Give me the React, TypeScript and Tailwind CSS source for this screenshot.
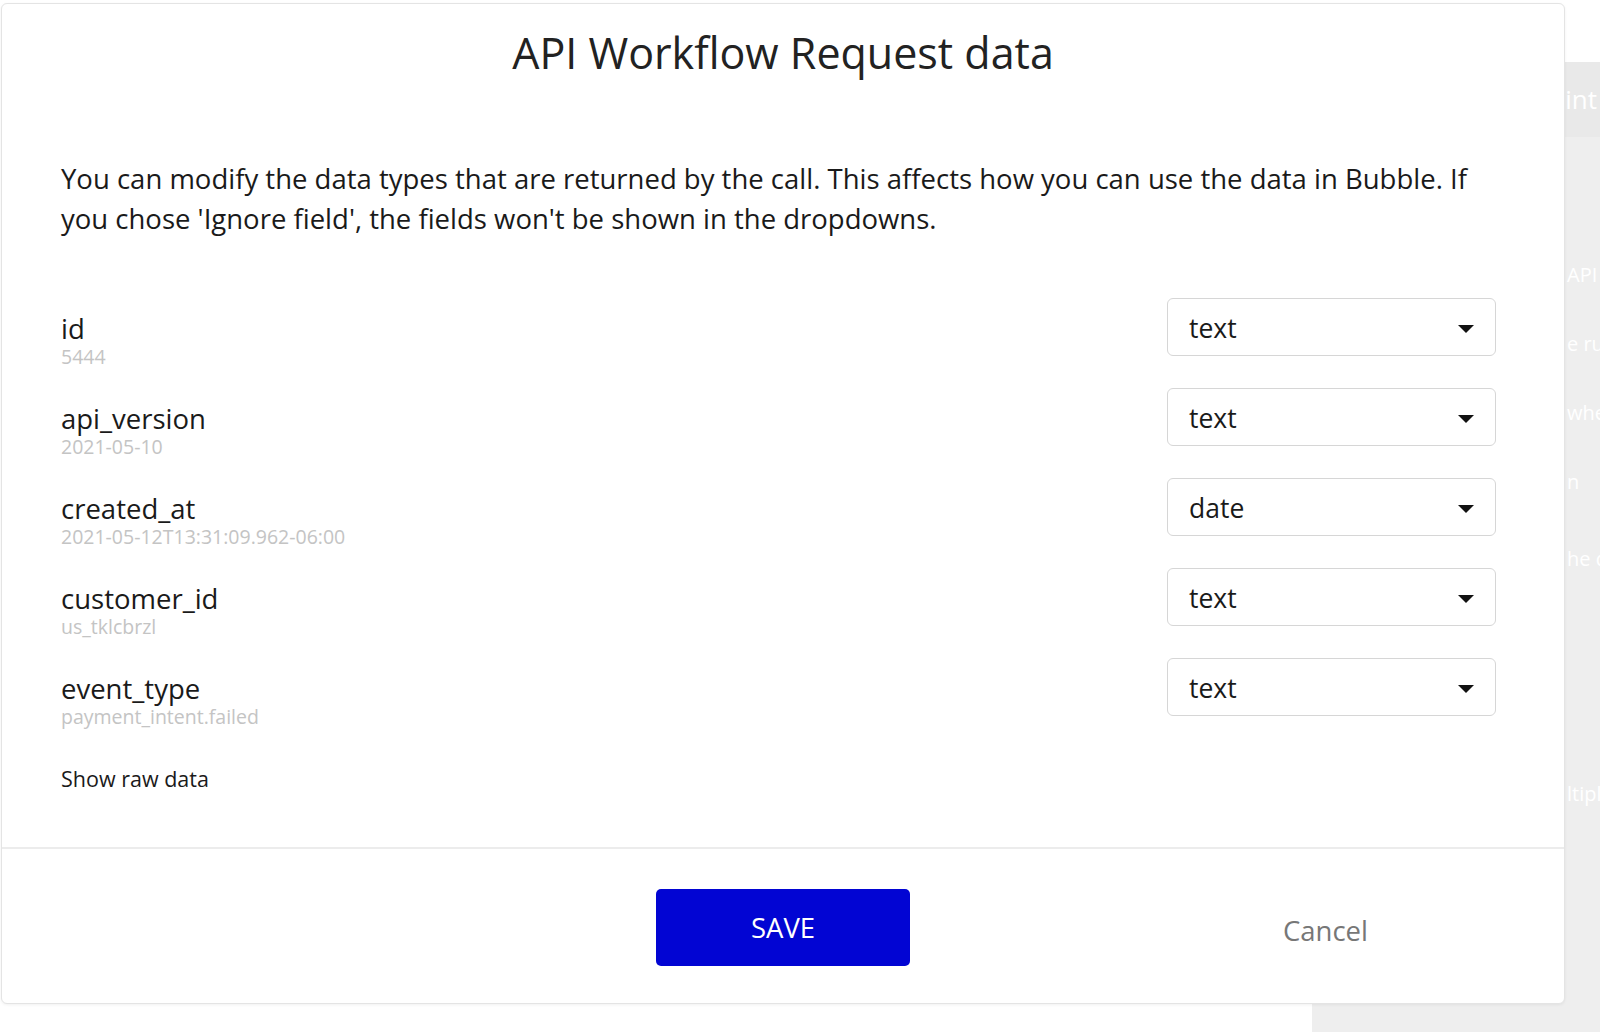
import React from 'react';

const fields = [
  { name: 'id', sample: '5444', type: 'text' },
  { name: 'api_version', sample: '2021-05-10', type: 'text' },
  { name: 'created_at', sample: '2021-05-12T13:31:09.962-06:00', type: 'date' },
  { name: 'customer_id', sample: 'us_tklcbrzl', type: 'text' },
  { name: 'event_type', sample: 'payment_intent.failed', type: 'text' },
];

function Caret() {
  return (
    <svg width="18" height="10" viewBox="0 0 18 10" className="shrink-0">
      <path d="M1 1 L17 1 L9 9 Z" fill="#111" />
    </svg>
  );
}

function TypeSelect({ value }: { value: string }) {
  return (
    <div className="w-[329px] h-[58px] shrink-0 flex items-center justify-between pt-[3px] pl-[21px] pr-[20px] border border-[#d6d6d6] rounded-[6px] bg-white">
      <span className="text-[26.5px] text-[#1a1a1a]">{value}</span>
      <Caret />
    </div>
  );
}

export default function App() {
  return (
    <div className="relative w-[1600px] h-[1032px] overflow-hidden bg-white font-['Open_Sans',sans-serif]">
      {/* page behind the popup */}
      <div className="flex h-full">
        <div className="flex-1" />
        <div className="w-[288px] mt-[62px] flex flex-col">
          <div className="h-[75px] bg-[#e9e9e9] flex items-center justify-end pr-[3px] text-[26px] text-white whitespace-nowrap">
            Endpoint
          </div>
          <div className="flex-1 bg-[#eeeeee] text-[20px] text-white whitespace-nowrap pl-[255px] pt-[123px] flex flex-col">
            <div className="h-[69px]">API calls</div>
            <div className="h-[69px]">e run</div>
            <div className="h-[69px]">when</div>
            <div className="h-[77px]">n</div>
            <div className="h-[235px]">he data</div>
            <div>ltiple</div>
          </div>
        </div>
      </div>

      {/* popup */}
      <div className="absolute left-[1px] top-[3px] w-[1564px] h-[1001px] bg-white border border-[#e4e4e4] rounded-[6px] shadow-[0_1px_3px_rgba(0,0,0,0.06)] flex flex-col">
        <div className="flex-1 px-[59px]">
          <h1 className="pt-[21px] text-center text-[43px] leading-[56px] text-[#222]">API Workflow Request data</h1>
          <p className="mt-[78px] pr-[9px] text-[27.5px] leading-[40px] text-[#1a1a1a]">
            You can modify the data types that are returned by the call. This affects how you can use the data in Bubble. If you chose 'Ignore field', the fields won't be shown in the dropdowns.
          </p>

          <div className="mt-[59px] pr-[9px] flex flex-col gap-[18px]">
            {fields.map((f) => (
              <div key={f.name} className="flex items-start justify-between">
                <div className="pt-[16px] flex flex-col">
                  <span className="text-[27.5px] leading-[30px] text-[#1a1a1a]">{f.name}</span>
                  <span className="text-[19.5px] leading-[26px] text-[#c4c4c4]">{f.sample}</span>
                </div>
                <TypeSelect value={f.type} />
              </div>
            ))}
          </div>

          <div className="mt-[35px] text-[21.5px] leading-[28px] text-[#1a1a1a]">Show raw data</div>
        </div>

        <div className="h-[156px] border-t-2 border-[#ececec] grid grid-cols-[1fr_auto_1fr] items-start">
          <div />
          <button className="mt-[40px] w-[254px] h-[77px] rounded-[5px] bg-[#0205d3] text-white text-[27.5px] leading-none">
            SAVE
          </button>
          <div className="flex justify-end pr-[196px] pt-[64px]">
            <span className="text-[27.5px] leading-[36px] text-[#777]">Cancel</span>
          </div>
        </div>
      </div>
    </div>
  );
}
